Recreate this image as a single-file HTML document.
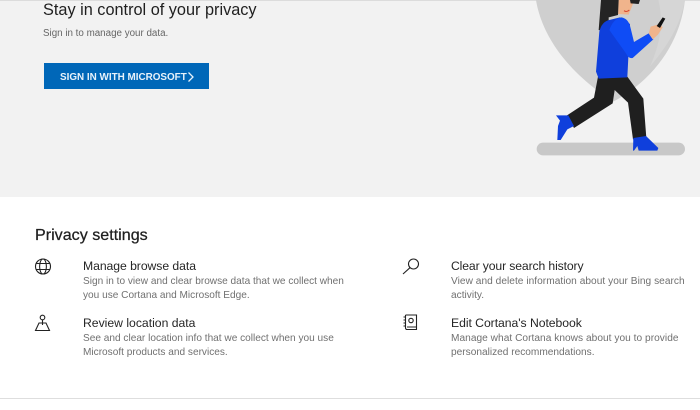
<!DOCTYPE html>
<html><head><meta charset="utf-8">
<style>
html,body{margin:0;padding:0;background:#fff}
body{width:700px;height:410px;overflow:hidden;position:relative;font-family:"Liberation Sans",sans-serif}
.a{position:absolute;white-space:nowrap}
.t{font-size:12.2px;color:#262626;line-height:15px}
.d{font-size:10.1px;color:#707070;line-height:14px}
.r{font-size:10.15px}
</style></head><body>
<div class="a" style="left:0;top:0;width:700px;height:197px;background:#f2f2f2"></div>
<div class="a" style="left:0;top:0;width:700px;height:1px;background:#dcdcdc"></div>
<svg class="a" style="left:520px;top:0" width="180" height="170" viewBox="0 0 540 510">
<path d="M48 0C65 105 140 215 280 305C400 240 480 130 495 0Z" fill="#cfcfcf"/>
<path d="M415 0C430 60 425 120 390 200C440 140 480 80 495 0Z" fill="#d6d6d6"/>
<rect x="50" y="428" width="445" height="38" rx="19" fill="#c8c8c8"/>
<path d="M296 0L294 42L326 44L338 14L340 0Z" fill="#f0b48c"/>
<path d="M330 0H360L356 12L332 10Z" fill="#222"/>
<path d="M312 32Q320 38 328 30" stroke="#d8452c" stroke-width="3" fill="none"/>
<path d="M243 0H296L294 45L266 52L266 97L236 90Z" fill="#242424"/>
<path d="M234 230L322 230L370 296L379 414L339 418L324 308L284 270L278 310L162 384L141 346L222 293Z" fill="#1f1f1f"/>
<path d="M238 95Q245 65 268 60L300 52L330 72L322 232L236 236L228 215Z" fill="#0f3fdc"/>
<path d="M268 90Q280 55 305 52Q326 56 332 85L342 126L386 100L400 118L338 174Q325 176 318 160Z" fill="#0f4cf5"/>
<path d="M386 100L392 80L420 72L428 82L414 104L398 118Z" fill="#f0b48c"/>
<path d="M410 78L428 52L436 56L420 84Z" fill="#111"/>
<path d="M108 346H145L162 378L142 388L122 420H112L114 378L120 362Z" fill="#0f3fdc"/>
<path d="M340 414L378 408L415 444L412 452H356L352 438L342 452H339Z" fill="#0f3fdc"/>
</svg>
<div class="a" style="left:43px;top:0;font-size:16.3px;line-height:20px;color:#1f1f1f">Stay in control of your privacy</div>
<div class="a" style="left:43px;top:27px;font-size:9.8px;line-height:14px;color:#666">Sign in to manage your data.</div>
<div class="a" style="left:44px;top:63px;width:165px;height:26px;background:#0067b8"></div>
<div class="a" style="left:60px;top:71px;font-size:9.9px;line-height:14px;font-weight:bold;color:#e8f2fa">SIGN IN WITH MICROSOFT</div>
<svg class="a" style="left:187px;top:71px" width="8" height="12" viewBox="0 0 8 12"><path d="M1.5 1.5L6 6L1.5 10.5" fill="none" stroke="#e8f2fa" stroke-width="1.3"/></svg>
<div class="a" style="left:35px;top:225px;font-size:16.1px;line-height:20px;color:#1f1f1f;-webkit-text-stroke:.25px #1f1f1f">Privacy settings</div>

<svg class="a" style="left:34px;top:258px" width="18" height="18" viewBox="0 0 18 18" fill="none" stroke="#222" stroke-width="1.1"><circle cx="9" cy="8.5" r="7.5"/><ellipse cx="9" cy="8.5" rx="3.4" ry="7.5"/><path d="M2.2 5.5H15.8M2.2 11.5H15.8"/></svg>
<div class="a t" style="left:83px;top:259px;letter-spacing:-.05px">Manage browse data</div>
<div class="a d" style="left:83px;top:275px">Sign in to view and clear browse data that we collect when</div>
<div class="a d" style="left:83px;top:289px">you use Cortana and Microsoft Edge.</div>

<svg class="a" style="left:34px;top:314px" width="17" height="18" viewBox="0 0 17 18" fill="none" stroke="#222" stroke-width="1.1"><circle cx="8.5" cy="3.5" r="2.3"/><path d="M8.5 6V11M5 9H12L15.5 16.5H1.5Z"/></svg>
<div class="a t" style="left:83px;top:316px">Review location data</div>
<div class="a d" style="left:83px;top:332px">See and clear location info that we collect when you use</div>
<div class="a d" style="left:83px;top:346px">Microsoft products and services.</div>

<svg class="a" style="left:402px;top:258px" width="18" height="17" viewBox="0 0 18 17" fill="none" stroke="#222" stroke-width="1.1"><circle cx="11.5" cy="6" r="5"/><path d="M8 9.7L1 16"/></svg>
<div class="a t" style="left:451px;top:259px;letter-spacing:-.12px">Clear your search history</div>
<div class="a d r" style="left:451px;top:275px;letter-spacing:.04px">View and delete information about your Bing search</div>
<div class="a d r" style="left:451px;top:289px">activity.</div>

<svg class="a" style="left:403px;top:314px" width="15" height="17" viewBox="0 0 15 17" fill="none" stroke="#222" stroke-width="1.1"><path d="M2.5 1H13.5V15.5H4A1.5 1.5 0 0 1 2.5 14V1M4 13H13.5"/><circle cx="8" cy="6.5" r="2.2"/><path d="M0.5 3H3M0.5 6H3M0.5 9H3M0.5 12H3"/></svg>
<div class="a t" style="left:451px;top:316px;letter-spacing:-.04px">Edit Cortana's Notebook</div>
<div class="a d r" style="left:451px;top:332px;letter-spacing:.04px">Manage what Cortana knows about you to provide</div>
<div class="a d r" style="left:451px;top:346px">personalized recommendations.</div>

<div class="a" style="left:0;top:398px;width:700px;height:1px;background:#dedede"></div>
</body></html>
